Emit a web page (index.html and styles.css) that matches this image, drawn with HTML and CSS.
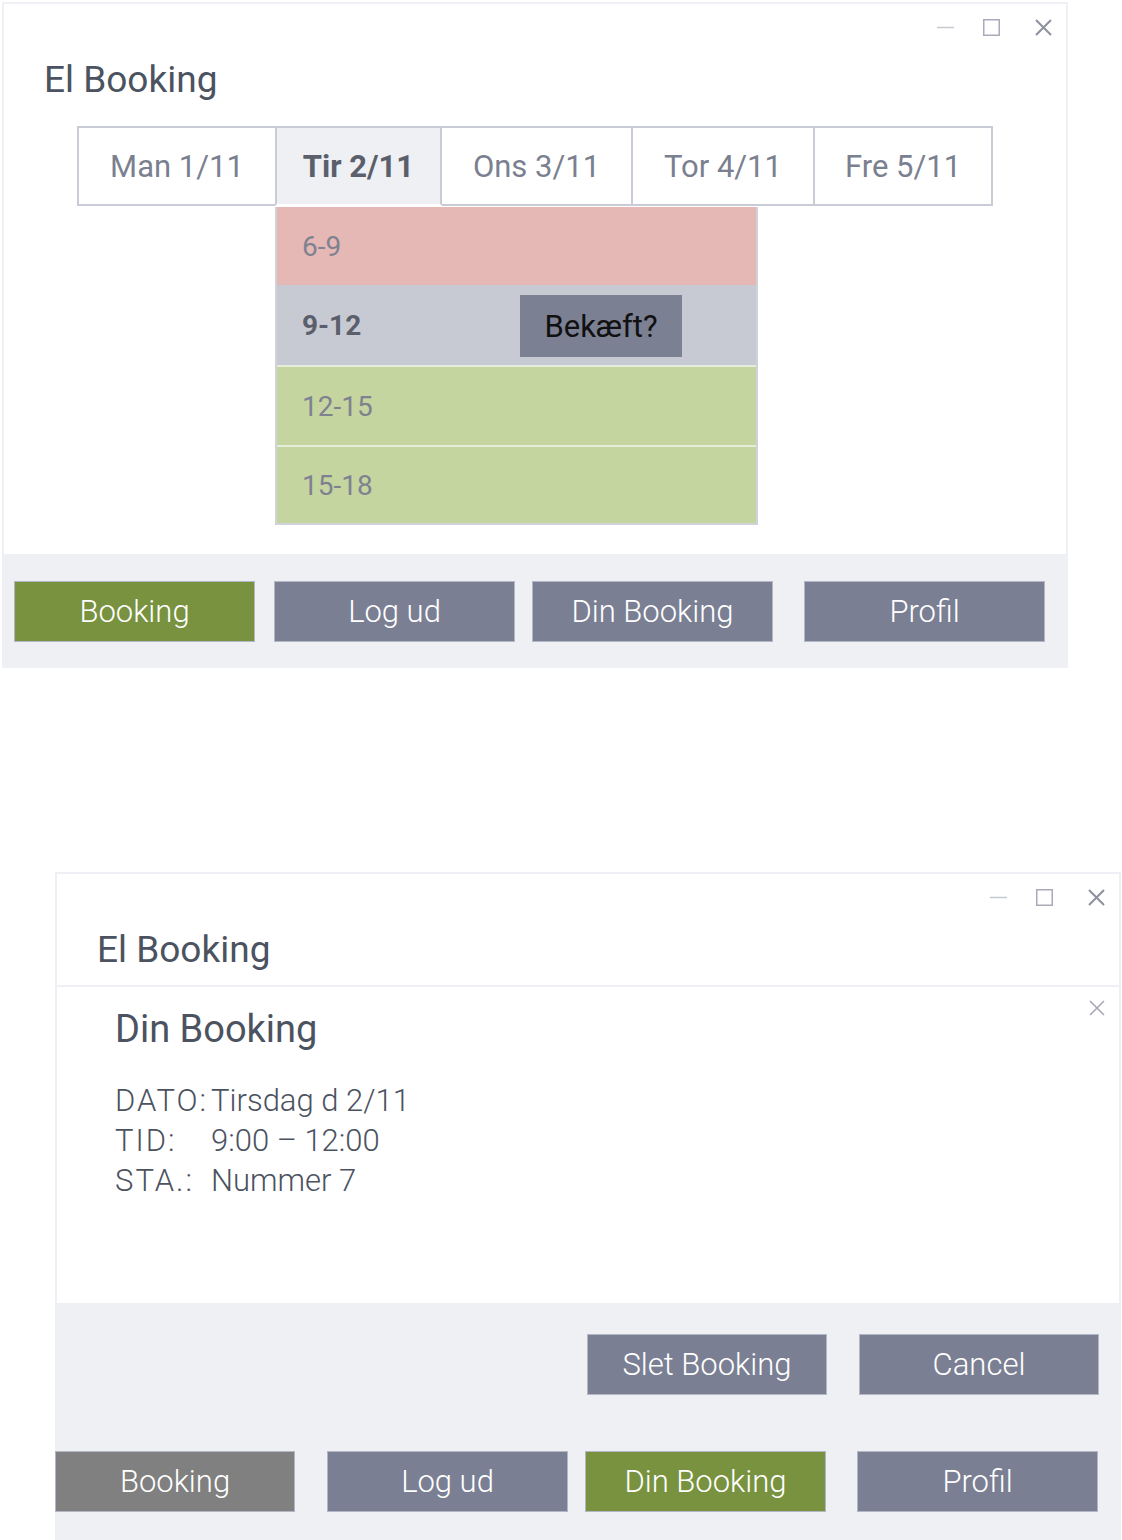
FILE: index.html
```html
<!DOCTYPE html>
<html lang="da">
<head>
<meta charset="utf-8">
<title>El Booking</title>
<link rel="stylesheet" href="styles.css">
</head>
<body>
<div class="win win1">
  <div class="titlebar">
    <svg class="ctl ctl-min" width="17" height="17" viewBox="0 0 17 17"><path d="M0 8.5H17" stroke="#c6c8d0" stroke-width="1.5"/></svg>
    <svg class="ctl ctl-max" width="17" height="17" viewBox="0 0 17 17"><rect x="0.75" y="0.75" width="15.5" height="15.5" fill="none" stroke="#a9abb8" stroke-width="1.5"/></svg>
    <svg class="ctl ctl-close" width="17" height="17" viewBox="0 0 17 17"><path d="M1 1L16 16M16 1L1 16" stroke="#8e909e" stroke-width="2"/></svg>
  </div>
  <h1 class="title">El Booking</h1>
  <div class="days">
    <div class="tab t1">Man 1/11</div>
    <div class="tab t2 active">Tir 2/11</div>
    <div class="tab t3">Ons 3/11</div>
    <div class="tab t4">Tor 4/11</div>
    <div class="tab t5">Fre 5/11</div>
  </div>
  <div class="slots">
    <div class="slot busy">6-9</div>
    <div class="slot sel"><span>9-12</span><button class="confirm">Bekæft?</button></div>
    <div class="slot free">12-15</div>
    <div class="slot free last">15-18</div>
  </div>
  <div class="footer nav nav1">
    <button class="btn green b1">Booking</button>
    <button class="btn slate b2">Log ud</button>
    <button class="btn slate b3">Din Booking</button>
    <button class="btn slate b4">Profil</button>
  </div>
</div>

<div class="win win2">
  <div class="header">
    <div class="titlebar">
      <svg class="ctl ctl-min" width="17" height="17" viewBox="0 0 17 17"><path d="M0 8.5H17" stroke="#c6c8d0" stroke-width="1.5"/></svg>
      <svg class="ctl ctl-max" width="17" height="17" viewBox="0 0 17 17"><rect x="0.75" y="0.75" width="15.5" height="15.5" fill="none" stroke="#a9abb8" stroke-width="1.5"/></svg>
      <svg class="ctl ctl-close" width="17" height="17" viewBox="0 0 17 17"><path d="M1 1L16 16M16 1L1 16" stroke="#8e909e" stroke-width="2"/></svg>
    </div>
    <h1 class="title">El Booking</h1>
  </div>
  <div class="dialog">
    <div class="dlg-head">
      <h2 class="dlg-title">Din Booking</h2>
      <svg class="dlg-close" width="16" height="16" viewBox="0 0 16 16"><path d="M1 1L15 15M15 1L1 15" stroke="#a3a6b2" stroke-width="1.5"/></svg>
    </div>
    <dl class="info">
      <dt>DATO:</dt><dd>Tirsdag d 2/11</dd>
      <dt>TID:</dt><dd>9:00 – 12:00</dd>
      <dt>STA.:</dt><dd>Nummer 7</dd>
    </dl>
  </div>
  <div class="footer2">
    <div class="dlg-actions">
      <button class="btn slate">Slet Booking</button>
      <button class="btn slate">Cancel</button>
    </div>
    <div class="nav nav2">
      <button class="btn gray b1">Booking</button>
      <button class="btn slate b2">Log ud</button>
      <button class="btn green b3">Din Booking</button>
      <button class="btn slate b4">Profil</button>
    </div>
  </div>
</div>
</body>
</html>
```
FILE: styles.css
```css
* { box-sizing: border-box; }
body {
  margin: 0;
  background: #fff;
  font-family: "Segoe UI", Roboto, "Liberation Sans", sans-serif;
}
.win {
  width: 1066px;
  border: 2px solid #eff0f5;
  border-bottom: none;
  background: #fff;
}
.win1 { margin: 2px 0 0 2px; }
.win2 { margin: 204px 0 0 55px; }

.titlebar {
  display: flex;
  justify-content: flex-end;
  align-items: flex-start;
  height: 32px;
  padding: 15px 14px 0 0;
}
.ctl { display: block; }
.ctl-max { margin-left: 29px; }
.ctl-close { margin-left: 35px; }

.title {
  margin: 21px 0 0 0;
  padding-left: 40px;
  font-size: 37px;
  line-height: 46px;
  font-weight: 400;
  color: #4b5260;
}

.days {
  display: flex;
  margin: 23px 0 0 73px;
  height: 80px;
}
.tab {
  height: 80px;
  border: 2px solid #c9ccd6;
  display: flex;
  align-items: center;
  justify-content: center;
  font-size: 31px;
  color: #7b8090;
  background: #fff;
}
.tab + .tab { margin-left: -2px; }
.t1 { width: 200px; }
.t2 { width: 167px; }
.t3 { width: 193px; }
.t4 { width: 184px; }
.t5 { width: 180px; }
.tab.active {
  background: #eff0f4;
  font-weight: 700;
  color: #5a5f6b;
  border-bottom-color: #ffffff;
  position: relative;
  z-index: 1;
}

.slots {
  margin: 1px 0 29px 271px;
  width: 483px;
  border: 2px solid #d0d2da;
  border-top: none;
}
.slot {
  display: flex;
  align-items: center;
  padding-left: 25px;
  font-size: 28px;
  color: #7e8290;
}
.busy { height: 78px; background: #e5b8b5; }
.sel {
  height: 80px;
  background: #c8cad3;
  color: #5a5f6b;
  font-weight: 700;
}
.free {
  height: 80px;
  background: #c5d59f;
  border-top: 2px solid #e6ecda;
}
.free.last { height: 78px; }
.confirm {
  margin: 2px 74px 0 auto;
  width: 162px;
  height: 62px;
  border: none;
  background: #7b8093;
  color: #111;
  font-family: inherit;
  font-size: 31px;
  font-weight: 400;
  padding: 0;
}

.btn {
  width: 241px;
  height: 61px;
  border: 1px solid #b3b7c5;
  font-family: inherit;
  font-size: 31px;
  font-weight: 300;
  color: #fff;
  padding: 0;
}
.green { background: #78923f; }
.slate { background: #7b7f93; }
.gray { background: #808080; }

.nav { display: flex; }
.footer {
  background: #eff0f4;
  height: 114px;
  padding-top: 27px;
}
.nav1 .b1 { margin-left: 10px; }
.nav1 .b2 { margin-left: 19px; }
.nav .b3 { margin-left: 17px; }
.nav .b4 { margin-left: 31px; }
.nav2 { margin-left: -2px; margin-top: 56px; }
.nav2 .b1 { width: 240px; }
.nav2 .b2 { margin-left: 32px; }

.header {
  padding-bottom: 12px;
  border-bottom: 2px solid #efeff5;
}
.dialog {
  height: 316px;
  padding: 13px 14px 0 58px;
}
.dlg-head {
  display: flex;
  justify-content: space-between;
  align-items: flex-start;
}
.dlg-title {
  margin: 7px 0 0 0;
  font-size: 38px;
  line-height: 45px;
  font-weight: 400;
  color: #4b5260;
}
.dlg-close { display: block; }
.info {
  display: grid;
  grid-template-columns: 96px auto;
  margin: 29px 0 0 0;
  font-size: 31px;
  line-height: 40px;
  font-weight: 300;
  color: #4b5260;
}
.info dt, .info dd { margin: 0; }
.info dt { letter-spacing: 2px; }

.footer2 {
  background: #eff0f4;
  height: 237px;
  padding-top: 31px;
}
.dlg-actions {
  display: flex;
  justify-content: flex-end;
  gap: 32px;
  padding-right: 20px;
}
.dlg-actions .btn { width: 240px; }
```
